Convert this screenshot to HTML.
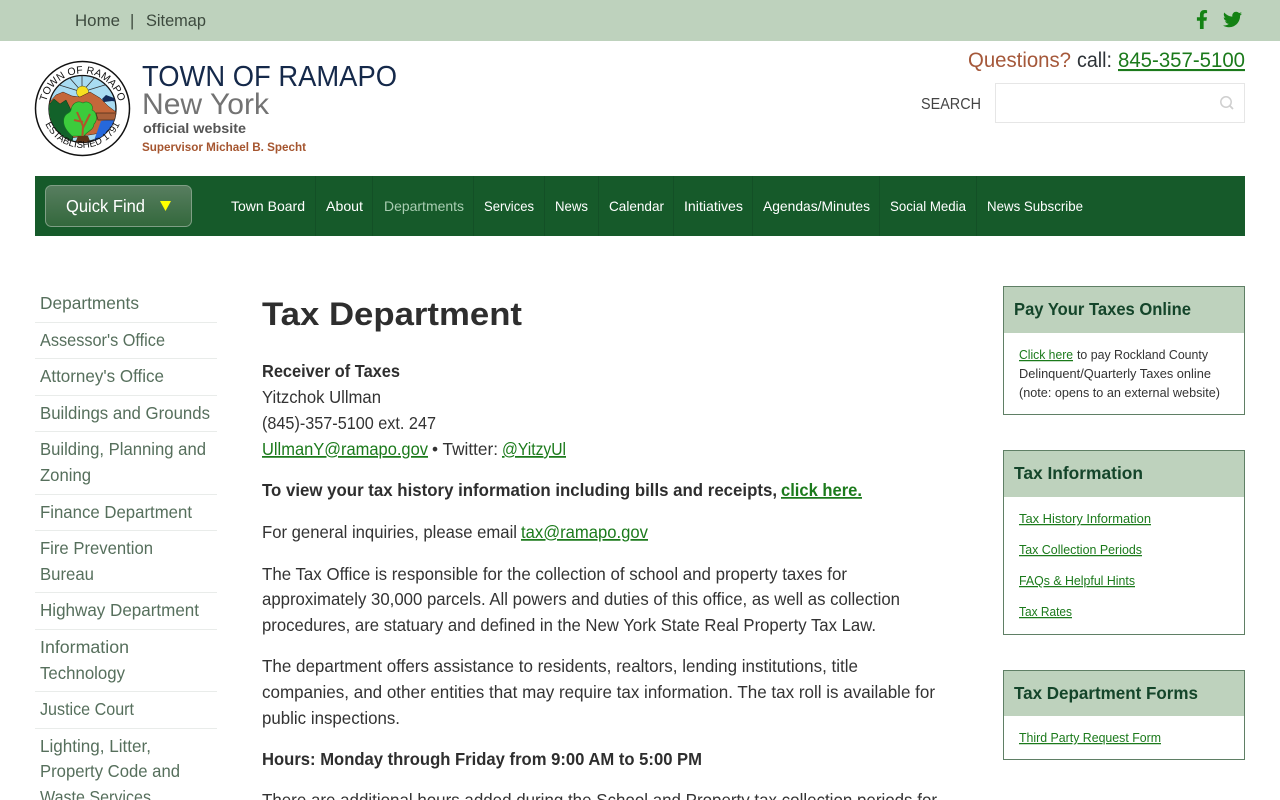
<!DOCTYPE html>
<html lang="en"><head><meta charset="utf-8"><title>Tax Department - Town of Ramapo</title>
<style>
html,body{margin:0;padding:0;width:1280px;height:800px;overflow:hidden;background:#fff}
svg{position:absolute;left:0;top:0;display:block}
text{font-family:"Liberation Sans",Arial,sans-serif;white-space:pre}
.b{font-size:17.5px;fill:#333}
.bb{font-size:17.5px;font-weight:700;fill:#2e2e2e}
.l{font-size:17.5px;fill:#1b7a1b;text-decoration:underline}
.s{font-size:17.5px;fill:#566f5c}
.n{font-size:14px;fill:#fff}
.t{font-size:17.5px;font-weight:700;fill:#14452a}
.r{font-size:12.5px;fill:#333}
.rl{font-size:12.5px;fill:#1b7a1b;text-decoration:underline}
</style></head><body>
<svg width="1280" height="800" viewBox="0 0 1280 800" xmlns="http://www.w3.org/2000/svg">
<defs>
<clipPath id="c"><circle cx="82.5" cy="109" r="33.5"/></clipPath>
<path id="tp" d="M45.500 117 A37.500 37.500 0 1 1 119.500 117"/>
<path id="bp" d="M44 121 A41 41 0 0 0 121 121"/>
<linearGradient id="g" x1="0" y1="0" x2="0" y2="1"><stop offset="0" stop-color="#587e60"/><stop offset="1" stop-color="#33683c"/></linearGradient>
</defs>
<!-- top bar -->
<rect width="1280" height="41" fill="#bed2bd"/>
<text x="75" y="26" font-size="16.5" fill="#3d4a3e" textLength="45" lengthAdjust="spacingAndGlyphs">Home</text>
<text x="130" y="26" font-size="16.5" fill="#3d4a3e">|</text>
<text x="146" y="26" font-size="16.5" fill="#3d4a3e" textLength="60" lengthAdjust="spacingAndGlyphs">Sitemap</text>
<svg x="1196" y="10" width="12" height="19" viewBox="0 0 320 512"><path fill="#148214" d="M279.14 288l14.22-92.66h-88.91v-60.13c0-25.35 12.42-50.06 52.24-50.06h40.42V6.26S260.43 0 225.36 0c-73.22 0-121.08 44.38-121.08 124.72v70.62H22.89V288h81.39v224h100.17V288z"/></svg>
<svg x="1223" y="10" width="19" height="19" viewBox="0 0 512 512"><path fill="#148214" d="M459.37 151.716c.325 4.548.325 9.097.325 13.645 0 138.72-105.583 298.558-298.558 298.558-59.452 0-114.68-17.219-161.137-47.106 8.447.974 16.568 1.299 25.34 1.299 49.055 0 94.213-16.568 130.274-44.832-46.132-.975-84.792-31.188-98.112-72.772 6.498.974 12.995 1.624 19.818 1.624 9.421 0 18.843-1.3 27.614-3.573-48.081-9.747-84.143-51.98-84.143-102.985v-1.299c13.969 7.797 30.214 12.67 47.431 13.319-28.264-18.843-46.781-51.005-46.781-87.391 0-19.492 5.197-37.36 14.294-52.954 51.655 63.675 129.3 105.258 216.365 109.807-1.624-7.797-2.599-15.918-2.599-24.04 0-57.828 46.782-104.934 104.934-104.934 30.213 0 57.502 12.67 76.67 33.137 23.715-4.548 46.456-13.32 66.599-25.34-7.798 24.366-24.366 44.833-46.132 57.827 21.117-2.273 41.584-8.122 60.426-16.243-14.292 20.791-32.161 39.308-52.628 54.253z"/></svg>
<!-- seal -->
<circle cx="82.5" cy="108.500" r="47" fill="#fff" stroke="#111" stroke-width="1.500"/>
<circle cx="82.5" cy="109" r="33.500" fill="#a9dcf2" stroke="#111" stroke-width="1.300"/>
<g clip-path="url(#c)">
<g stroke="#333" stroke-width=".8"><path d="M82 92L82 74M82 92L68 76M82 92L96 76M82 92L56 84M82 92L108 84"/></g>
<circle cx="82.500" cy="92" r="6" fill="#f7e020" stroke="#222" stroke-width=".4"/>
<path d="M48 104L56 95L63 92L72 96L80 97L90 92L100 98L108 106L116 112L118 130L60 140L46 125Z" fill="#c4673a" stroke="#3a1e10" stroke-width=".5"/>
<path d="M102 99L106 95L114 98L118 102L112 101L104 102Z" fill="#102a5a"/>
<path d="M101 121L118 118L118 146L92 146Z" fill="#2668dc"/>
<path d="M96 113L116 113L116 120L98 120Z" fill="#a8603a" stroke="#4a2a18" stroke-width=".7"/>
<path d="M46 108L54 99L60 104L66 100L72 112L74 124L72 146L46 146Z" fill="#12622a" stroke="#0a3016" stroke-width=".5"/>
<path d="M64 118C66 112 70 114 71 110C72 103 78 100 83 103C87 100 94 104 92 110C97 112 98 120 94 124C94 130 86 132 84 136L72 136C68 132 62 126 64 118Z" fill="#3ccb3c" stroke="#147a20" stroke-width=".6"/>
<path d="M82 144L83 126L77 112M83 128L90 114M83 122L74 120" stroke="#b0562a" stroke-width="2" fill="none"/>
<path d="M74 146L92 146L88 136L78 136Z" fill="#5e3418"/>
</g>
<text font-size="10.5" fill="#111" letter-spacing=".1"><textPath href="#tp" startOffset="50%" text-anchor="middle">TOWN OF RAMAPO</textPath></text>
<text font-size="9.800" fill="#111" letter-spacing=".1"><textPath href="#bp" startOffset="50%" text-anchor="middle">ESTABLISHED 1791</textPath></text>
<!-- logo text -->
<text x="142" y="86" font-size="28.5" fill="#15294a" textLength="255" lengthAdjust="spacingAndGlyphs">TOWN OF RAMAPO</text>
<text x="142" y="114" font-size="29.5" fill="#737373" textLength="127" lengthAdjust="spacingAndGlyphs">New York</text>
<text x="143" y="133" font-size="13.5" font-weight="700" fill="#555" textLength="103" lengthAdjust="spacingAndGlyphs">official website</text>
<text x="142" y="151" font-size="12" font-weight="700" fill="#a5552f" textLength="164" lengthAdjust="spacingAndGlyphs">Supervisor Michael B. Specht</text>
<!-- header right -->
<text x="968" y="67" font-size="21" fill="#a5583a" textLength="103" lengthAdjust="spacingAndGlyphs">Questions?</text>
<text x="1077" y="67" font-size="21" fill="#2e3338" textLength="35" lengthAdjust="spacingAndGlyphs">call:</text>
<text x="1118" y="67" font-size="21" fill="#1b7a1b" text-decoration="underline" textLength="127" lengthAdjust="spacingAndGlyphs">845-357-5100</text>
<text x="921" y="109" font-size="16" fill="#444" textLength="60" lengthAdjust="spacingAndGlyphs">SEARCH</text>
<rect x="995.5" y="83.5" width="249" height="39" fill="#fff" stroke="#e6e6e6"/>
<circle cx="1226" cy="102" r="5.2" fill="none" stroke="#cfcfcf" stroke-width="1.5"/><path d="M1229.8 105.8L1233 109" stroke="#cfcfcf" stroke-width="1.8"/>
<!-- nav -->
<rect x="35" y="176" width="1210" height="60" fill="#165a2a"/>
<rect x="45.5" y="185.5" width="146" height="41" rx="6" fill="url(#g)" stroke="#7f9f85"/>
<text x="66" y="212" font-size="17.5" fill="#fff" textLength="79" lengthAdjust="spacingAndGlyphs">Quick Find</text>
<path d="M160 201H171L165.500 211Z" fill="#ffff00"/>
<g stroke="#135026"><path d="M315.500 176V236M372.500 176V236M473.500 176V236M544.500 176V236M598.500 176V236M673.500 176V236M752.500 176V236M879.500 176V236M976.500 176V236"/></g>
<text class="n" x="231" y="211" textLength="74" lengthAdjust="spacingAndGlyphs">Town Board</text>
<text class="n" x="326" y="211" textLength="37" lengthAdjust="spacingAndGlyphs">About</text>
<text class="n" x="384" y="211" textLength="80" lengthAdjust="spacingAndGlyphs" style="fill:#a9cdb2">Departments</text>
<text class="n" x="484" y="211" textLength="50" lengthAdjust="spacingAndGlyphs">Services</text>
<text class="n" x="555" y="211" textLength="33" lengthAdjust="spacingAndGlyphs">News</text>
<text class="n" x="609" y="211" textLength="55" lengthAdjust="spacingAndGlyphs">Calendar</text>
<text class="n" x="684" y="211" textLength="59" lengthAdjust="spacingAndGlyphs">Initiatives</text>
<text class="n" x="763" y="211" textLength="107" lengthAdjust="spacingAndGlyphs">Agendas/Minutes</text>
<text class="n" x="890" y="211" textLength="76" lengthAdjust="spacingAndGlyphs">Social Media</text>
<text class="n" x="987" y="211" textLength="96" lengthAdjust="spacingAndGlyphs">News Subscribe</text>
<!-- sidebar -->
<g stroke="#e9ecea"><path d="M35 322.500H217M35 358.500H217M35 395.500H217M35 431.500H217M35 494.500H217M35 530.500H217M35 592.500H217M35 629.500H217M35 691.500H217M35 728.500H217"/></g>
<text class="s" x="40" y="309" textLength="99" lengthAdjust="spacingAndGlyphs">Departments</text>
<text class="s" x="40" y="346" textLength="125" lengthAdjust="spacingAndGlyphs">Assessor's Office</text>
<text class="s" x="40" y="382" textLength="124" lengthAdjust="spacingAndGlyphs">Attorney's Office</text>
<text class="s" x="40" y="419" textLength="170" lengthAdjust="spacingAndGlyphs">Buildings and Grounds</text>
<text class="s" x="40" y="455" textLength="166" lengthAdjust="spacingAndGlyphs">Building, Planning and</text>
<text class="s" x="40" y="481" textLength="51" lengthAdjust="spacingAndGlyphs">Zoning</text>
<text class="s" x="40" y="518" textLength="152" lengthAdjust="spacingAndGlyphs">Finance Department</text>
<text class="s" x="40" y="554" textLength="113" lengthAdjust="spacingAndGlyphs">Fire Prevention</text>
<text class="s" x="40" y="580" textLength="54" lengthAdjust="spacingAndGlyphs">Bureau</text>
<text class="s" x="40" y="616" textLength="159" lengthAdjust="spacingAndGlyphs">Highway Department</text>
<text class="s" x="40" y="653" textLength="89" lengthAdjust="spacingAndGlyphs">Information</text>
<text class="s" x="40" y="679" textLength="85" lengthAdjust="spacingAndGlyphs">Technology</text>
<text class="s" x="40" y="715" textLength="94" lengthAdjust="spacingAndGlyphs">Justice Court</text>
<text class="s" x="40" y="752" textLength="111" lengthAdjust="spacingAndGlyphs">Lighting, Litter,</text>
<text class="s" x="40" y="777" textLength="140" lengthAdjust="spacingAndGlyphs">Property Code and</text>
<text class="s" x="40" y="803" textLength="111" lengthAdjust="spacingAndGlyphs">Waste Services</text>
<!-- main -->
<text x="262" y="325" font-size="32" font-weight="700" fill="#2e2e2e" textLength="260" lengthAdjust="spacingAndGlyphs">Tax Department</text>
<text class="bb" x="262" y="377" textLength="138" lengthAdjust="spacingAndGlyphs">Receiver of Taxes</text>
<text class="b" x="262" y="403" textLength="119" lengthAdjust="spacingAndGlyphs">Yitzchok Ullman</text>
<text class="b" x="262" y="429" textLength="174" lengthAdjust="spacingAndGlyphs">(845)-357-5100 ext. 247</text>
<text class="l" x="262" y="455" textLength="166" lengthAdjust="spacingAndGlyphs">UllmanY@ramapo.gov</text>
<text class="b" x="432" y="455" textLength="66" lengthAdjust="spacingAndGlyphs">• Twitter:</text>
<text class="l" x="502" y="455" textLength="64" lengthAdjust="spacingAndGlyphs">@YitzyUl</text>
<text class="bb" x="262" y="496" textLength="515" lengthAdjust="spacingAndGlyphs">To view your tax history information including bills and receipts,</text>
<text class="l" x="781" y="496" font-weight="700" textLength="81" lengthAdjust="spacingAndGlyphs">click here.</text>
<text class="b" x="262" y="538" textLength="255" lengthAdjust="spacingAndGlyphs">For general inquiries, please email</text>
<text class="l" x="521" y="538" textLength="127" lengthAdjust="spacingAndGlyphs">tax@ramapo.gov</text>
<text class="b" x="262" y="580" textLength="585" lengthAdjust="spacingAndGlyphs">The Tax Office is responsible for the collection of school and property taxes for</text>
<text class="b" x="262" y="605" textLength="638" lengthAdjust="spacingAndGlyphs">approximately 30,000 parcels. All powers and duties of this office, as well as collection</text>
<text class="b" x="262" y="631" textLength="614" lengthAdjust="spacingAndGlyphs">procedures, are statuary and defined in the New York State Real Property Tax Law.</text>
<text class="b" x="262" y="672" textLength="596" lengthAdjust="spacingAndGlyphs">The department offers assistance to residents, realtors, lending institutions, title</text>
<text class="b" x="262" y="698" textLength="673" lengthAdjust="spacingAndGlyphs">companies, and other entities that may require tax information. The tax roll is available for</text>
<text class="b" x="262" y="724" textLength="138" lengthAdjust="spacingAndGlyphs">public inspections.</text>
<text class="bb" x="262" y="765" textLength="440" lengthAdjust="spacingAndGlyphs">Hours: Monday through Friday from 9:00 AM to 5:00 PM</text>
<text class="b" x="262" y="806" textLength="675" lengthAdjust="spacingAndGlyphs">There are additional hours added during the School and Property tax collection periods for</text>
<!-- right boxes -->
<rect x="1003.500" y="286.500" width="241" height="128" fill="#fff" stroke="#5f7f65"/>
<rect x="1004" y="287" width="240" height="46" fill="#bed2bd"/>
<text class="t" x="1014" y="315" textLength="177" lengthAdjust="spacingAndGlyphs">Pay Your Taxes Online</text>
<text class="rl" x="1019" y="359" textLength="54" lengthAdjust="spacingAndGlyphs">Click here</text>
<text class="r" x="1077" y="359" textLength="131" lengthAdjust="spacingAndGlyphs">to pay Rockland County</text>
<text class="r" x="1019" y="378" textLength="192" lengthAdjust="spacingAndGlyphs">Delinquent/Quarterly Taxes online</text>
<text class="r" x="1019" y="397" textLength="201" lengthAdjust="spacingAndGlyphs">(note: opens to an external website)</text>
<rect x="1003.500" y="450.500" width="241" height="184" fill="#fff" stroke="#5f7f65"/>
<rect x="1004" y="451" width="240" height="46" fill="#bed2bd"/>
<text class="t" x="1014" y="479" textLength="129" lengthAdjust="spacingAndGlyphs">Tax Information</text>
<text class="rl" x="1019" y="523" textLength="132" lengthAdjust="spacingAndGlyphs">Tax History Information</text>
<text class="rl" x="1019" y="554" textLength="123" lengthAdjust="spacingAndGlyphs">Tax Collection Periods</text>
<text class="rl" x="1019" y="585" textLength="116" lengthAdjust="spacingAndGlyphs">FAQs &amp; Helpful Hints</text>
<text class="rl" x="1019" y="616" textLength="53" lengthAdjust="spacingAndGlyphs">Tax Rates</text>
<rect x="1003.500" y="670.500" width="241" height="89" fill="#fff" stroke="#5f7f65"/>
<rect x="1004" y="671" width="240" height="45" fill="#bed2bd"/>
<text class="t" x="1014" y="699" textLength="184" lengthAdjust="spacingAndGlyphs">Tax Department Forms</text>
<text class="rl" x="1019" y="742" textLength="142" lengthAdjust="spacingAndGlyphs">Third Party Request Form</text>
</svg>
</body></html>
